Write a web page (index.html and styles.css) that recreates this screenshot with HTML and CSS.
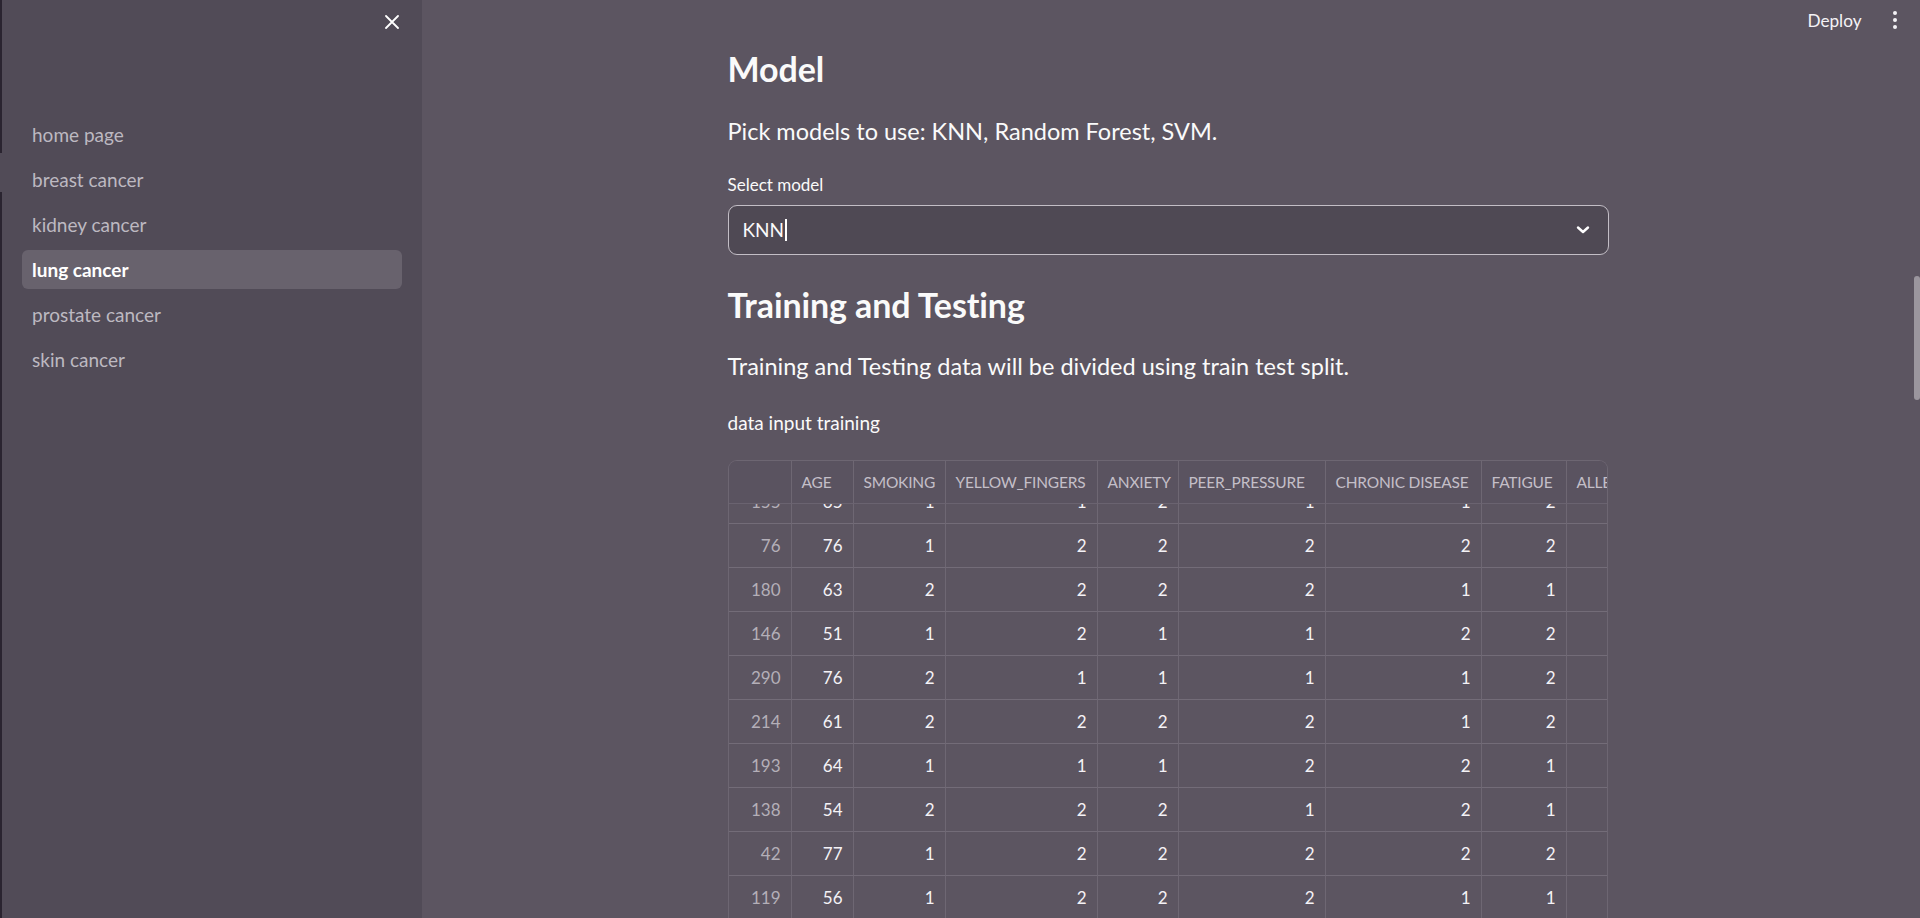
FILE: index.html
```html
<!DOCTYPE html>
<html>
<head>
<meta charset="utf-8">
<link rel="stylesheet" href="styles.css">
</head>
<body>
<div class="app">
  <aside class="sidebar">
    <div class="sidebar-head">
      <button class="close-btn" aria-label="Close sidebar">
        <svg width="14" height="14" viewBox="0 0 14 14"><path d="M1 1 L13 13 M13 1 L1 13" stroke="#ffffff" stroke-width="1.8" stroke-linecap="round"/></svg>
      </button>
    </div>
    <nav class="nav">
      <a class="nav-item">home page</a>
      <a class="nav-item">breast cancer</a>
      <a class="nav-item">kidney cancer</a>
      <a class="nav-item active">lung cancer</a>
      <a class="nav-item">prostate cancer</a>
      <a class="nav-item">skin cancer</a>
    </nav>
  </aside>
  <main class="main">
    <header class="topbar">
      <span class="deploy">Deploy</span>
      <span class="menu-dots"><i></i><i></i><i></i></span>
    </header>
    <div class="scroll-thumb"></div>
    <div class="content">
      <h3 class="heading">Model</h3>
      <p class="lead">Pick models to use: KNN, Random Forest, SVM.</p>
      <label class="field-label">Select model</label>
      <div class="select">
        <span class="select-value">KNN<span class="caret"></span></span>
        <svg class="chevron" width="14" height="10" viewBox="0 0 14 10"><path d="M2 2.5 L7 7 L12 2.5" fill="none" stroke="#ffffff" stroke-width="2.4" stroke-linecap="round" stroke-linejoin="round"/></svg>
      </div>
      <h3 class="heading heading-2">Training and Testing</h3>
      <p class="lead lead-2">Training and Testing data will be divided using train test split.</p>
      <p class="caption">data input training</p>
      <div class="grid">
        <div class="grid-head row">
          <div class="c idx"></div>
          <div class="c">AGE</div>
          <div class="c">SMOKING</div>
          <div class="c">YELLOW_FINGERS</div>
          <div class="c">ANXIETY</div>
          <div class="c">PEER_PRESSURE</div>
          <div class="c">CHRONIC DISEASE</div>
          <div class="c">FATIGUE</div>
          <div class="c">ALLERGY</div>
        </div>
        <div class="grid-body">
          <div class="grid-scroll">
            <div class="row"><div class="c idx">155</div><div class="c">65</div><div class="c">1</div><div class="c">1</div><div class="c">2</div><div class="c">1</div><div class="c">1</div><div class="c">2</div><div class="c">1</div></div>
            <div class="row"><div class="c idx">76</div><div class="c">76</div><div class="c">1</div><div class="c">2</div><div class="c">2</div><div class="c">2</div><div class="c">2</div><div class="c">2</div><div class="c">1</div></div>
            <div class="row"><div class="c idx">180</div><div class="c">63</div><div class="c">2</div><div class="c">2</div><div class="c">2</div><div class="c">2</div><div class="c">1</div><div class="c">1</div><div class="c">2</div></div>
            <div class="row"><div class="c idx">146</div><div class="c">51</div><div class="c">1</div><div class="c">2</div><div class="c">1</div><div class="c">1</div><div class="c">2</div><div class="c">2</div><div class="c">1</div></div>
            <div class="row"><div class="c idx">290</div><div class="c">76</div><div class="c">2</div><div class="c">1</div><div class="c">1</div><div class="c">1</div><div class="c">1</div><div class="c">2</div><div class="c">2</div></div>
            <div class="row"><div class="c idx">214</div><div class="c">61</div><div class="c">2</div><div class="c">2</div><div class="c">2</div><div class="c">2</div><div class="c">1</div><div class="c">2</div><div class="c">1</div></div>
            <div class="row"><div class="c idx">193</div><div class="c">64</div><div class="c">1</div><div class="c">1</div><div class="c">1</div><div class="c">2</div><div class="c">2</div><div class="c">1</div><div class="c">2</div></div>
            <div class="row"><div class="c idx">138</div><div class="c">54</div><div class="c">2</div><div class="c">2</div><div class="c">2</div><div class="c">1</div><div class="c">2</div><div class="c">1</div><div class="c">1</div></div>
            <div class="row"><div class="c idx">42</div><div class="c">77</div><div class="c">1</div><div class="c">2</div><div class="c">2</div><div class="c">2</div><div class="c">2</div><div class="c">2</div><div class="c">2</div></div>
            <div class="row"><div class="c idx">119</div><div class="c">56</div><div class="c">1</div><div class="c">2</div><div class="c">2</div><div class="c">2</div><div class="c">1</div><div class="c">1</div><div class="c">1</div></div>
            <div class="row"><div class="c idx">250</div><div class="c">58</div><div class="c">2</div><div class="c">1</div><div class="c">1</div><div class="c">2</div><div class="c">2</div><div class="c">2</div><div class="c">1</div></div>
          </div>
        </div>
      </div>
    </div>
  </main>
</div>
</body>
</html>
```

FILE: styles.css
```css
* { box-sizing: border-box; }
html, body {
  margin: 0;
  padding: 0;
  width: 1920px;
  height: 918px;
  overflow: hidden;
  background: #5c5561;
  font-family: "Lato", "Open Sans", sans-serif;
  color: #fafafa;
}
.app {
  display: flex;
  width: 1920px;
  height: 918px;
}
.sidebar {
  width: 422px;
  flex: 0 0 422px;
  height: 918px;
  background-color: #514b57;
  background-image: linear-gradient(to bottom, #2a2430 0, #2a2430 153px, #514b57 153px, #514b57 192px, #2a2430 192px);
  background-size: 2px 100%;
  background-repeat: no-repeat;
  display: flex;
  flex-direction: column;
}
.sidebar-head {
  height: 44px;
  display: flex;
  justify-content: flex-end;
  align-items: flex-start;
  padding: 14px 22px 0 0;
}
.close-btn {
  background: none;
  border: 0;
  padding: 0;
  width: 16px;
  height: 16px;
  display: flex;
  align-items: center;
  justify-content: center;
}
.nav {
  display: flex;
  flex-direction: column;
  gap: 6px;
  padding: 71px 20px 0 22px;
}
.nav-item {
  display: block;
  height: 39px;
  line-height: 39px;
  padding-left: 10px;
  border-radius: 6px;
  font-size: 19px;
  color: #bdb9c1;
}
.nav-item.active {
  background: #68626d;
  color: #ffffff;
  font-weight: 700;
}
.main {
  flex: 1;
  position: relative;
  padding-right: 6px;
  height: 918px;
  overflow: hidden;
}
.topbar {
  position: absolute;
  top: 0;
  right: 0;
  height: 40px;
  display: flex;
  align-items: center;
  gap: 31px;
  padding-right: 23px;
}
.deploy {
  font-size: 17.2px;
  color: #f4f2f6;
}
.menu-dots {
  display: flex;
  flex-direction: column;
  gap: 2.5px;
}
.menu-dots i {
  display: block;
  width: 4.5px;
  height: 4.5px;
  border-radius: 50%;
  background: #f4f2f6;
}
.scroll-thumb {
  position: absolute;
  right: 0;
  top: 276px;
  width: 6px;
  height: 124px;
  border-radius: 3px;
  background: #9b969e;
}
.content {
  width: 881px;
  margin: 0 auto;
  padding-top: 48px;
}
.heading {
  margin: 0;
  font-size: 34px;
  line-height: 41px;
  font-weight: 700;
  color: #fafafa;
  letter-spacing: -0.1px;
}
.heading-2 { margin-top: 29px; }
.lead {
  margin: 26.5px 0 0;
  font-size: 23.5px;
  line-height: 30px;
  color: #fafafa;
}
.lead-2 { margin-top: 26px; }
.field-label {
  display: block;
  margin-top: 28px;
  font-size: 17px;
  line-height: 22px;
  color: #fafafa;
}
.select {
  margin-top: 9px;
  height: 50px;
  border: 1px solid #c3bec6;
  border-radius: 9px;
  background: #4f4954;
  display: flex;
  align-items: center;
  justify-content: space-between;
  padding: 0 18px 0 14px;
}
.select-value {
  font-size: 19px;
  display: flex;
  align-items: center;
  color: #fafafa;
}
.caret {
  display: inline-block;
  width: 1.5px;
  height: 22px;
  margin-left: 1px;
  background: #ffffff;
}
.caption {
  margin: 29px 0 0;
  font-size: 19px;
  line-height: 25px;
  color: #fafafa;
}
.grid {
  margin-top: 25px;
  width: 880px;
  border: 1px solid #6d6672;
  border-bottom: 0;
  border-radius: 9px 9px 0 0;
  overflow: hidden;
  font-size: 17px;
}
.row {
  display: grid;
  grid-template-columns: 63px 62px 92px 152px 81px 147px 156px 85px 100px;
  height: 44px;
}
.c {
  border-right: 1px solid #6e6773;
  border-bottom: 1px solid #736c78;
  display: flex;
  align-items: center;
  justify-content: flex-end;
  padding: 0 10px;
  color: #f4f2f6;
  white-space: nowrap;
  overflow: hidden;
}
.c.idx { color: #b4afb8; }
.grid-head {
  height: 43px;
  background: #5a5360;
  position: relative;
  z-index: 1;
}
.grid-head .c {
  justify-content: flex-start;
  color: #c4bfc8;
  border-bottom: 1px solid #6a6370;
  font-size: 15.5px;
  letter-spacing: -0.2px;
  padding: 0 8px 0 10px;
}
.grid-body {
  height: 420px;
  overflow: hidden;
}
.grid-scroll {
  margin-top: -24px;
}
```
